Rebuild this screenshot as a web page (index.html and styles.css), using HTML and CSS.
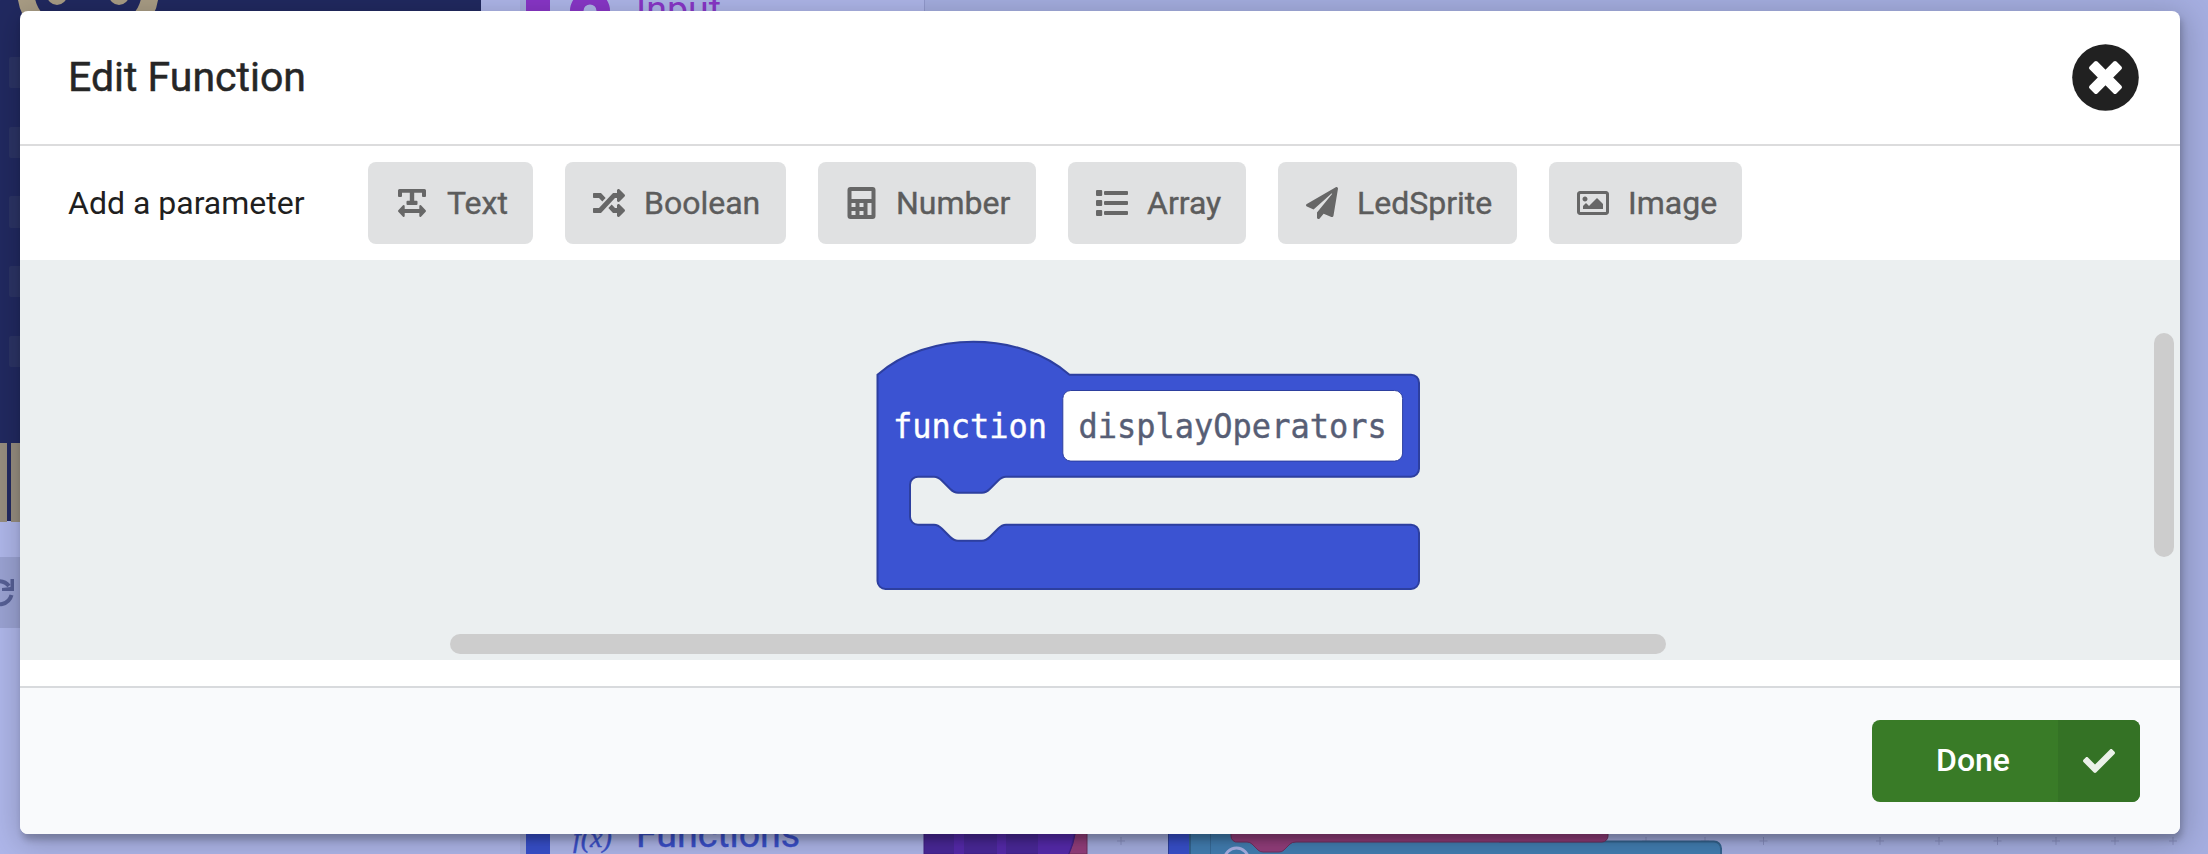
FILE: index.html
```html
<!DOCTYPE html>
<html lang="en">
<head>
<meta charset="utf-8">
<title>Edit Function</title>
<link rel="stylesheet" href="styles.css">
</head>
<body>
<svg class="backdrop" viewBox="0 0 2208 854" aria-hidden="true">
  <!-- simulator board -->
  <rect class="navy" width="481" height="521"/>
  <rect class="ring" x="25.9" y="-49.5" width="124.2" height="83" rx="41.5"/>
  <circle class="gold" cx="57" cy="-5" r="10"/><circle class="gold" cx="119" cy="-5" r="10"/>
  <g class="led">
    <rect x="9" y="57" width="30" height="31" rx="2"/><rect x="9" y="127" width="30" height="31" rx="2"/>
    <rect x="9" y="196" width="30" height="32" rx="2"/><rect x="9" y="266" width="30" height="31" rx="2"/>
    <rect x="9" y="336" width="30" height="31" rx="2"/>
  </g>
  <g class="pin"><rect y="443" width="7" height="79"/><rect x="11" y="443" width="30" height="79"/></g>
  <rect class="simbar" y="557" width="100" height="71"/>
  <path class="refresh" d="M-10 585A12.5 12.5 0 0 1 9 586M11.500 595A12.500 12.500 0 0 1 -10 600"/>
  <path class="refresh-tip" d="M14 579V591H2V588L10.500 587V579Z"/>
  <!-- toolbox -->
  <rect class="row-edge" x="520" width="6" height="854"/>
  <rect class="purple" x="526" width="24" height="400"/>
  <circle class="purple-ring" cx="590" cy="11" r="13.300"/>
  <text class="cat cat-input" x="636" y="22">Input</text>
  <rect class="func" x="526" y="600" width="24" height="254"/>
  <text class="fx" x="573" y="847">f(x)</text>
  <text class="cat cat-func" x="636" y="846.500">Functions</text>
  <rect class="canvas" x="924" width="1284" height="854"/>
  <path class="canvas-edge" d="M924.500 0V800"/>
  <!-- workspace blocks -->
  <path class="plus" d="M1117 841h8m-4-4v8M1642 841h8m-4-4v8M1701 841h8m-4-4v8M1759.500 841h8m-4-4v8M1876 841h8m-4-4v8M1935 841h8m-4-4v8M1993.500 841h8m-4-4v8M2052 841h8m-4-4v8M2111 841h8m-4-4v8M2169 841h8m-4-4v8"/>
  <rect class="maroon" x="1060" y="800" width="27" height="54"/>
  <path class="violet" d="M924 800H1078Q1078 835 1069 854H924Z"/>
  <path class="violet-light" d="M954 800h10v54h-10zM997 800h9v54h-9zM1038 800H1076Q1076 835 1068 854H1038Z"/>
  <rect class="func edge" x="1168.500" y="800" width="30" height="60"/>
  <path class="teal" d="M1190 800H1500V841.500H1714a7 7 0 0 1 7 7V860H1190Z"/>
  <path class="teal-line" d="M1210.500 800V860"/>
  <path class="maroon" d="M1231 800H1608V836a6 6 0 0 1-6 6H1296q-4 0-6 2l-6 6q-2 2-5 2h-16q-3 0-5-2l-6-6q-2-2-5-2h-9a6 6 0 0 1-7-6Z"/>
  <circle class="mutator" cx="1236.500" cy="860" r="12"/>
</svg>

<main class="modal">
  <header class="modal-header">
    <h1 class="title">Edit Function</h1>
    <svg class="close" viewBox="0 0 67 67">
      <circle cx="33.500" cy="33.500" r="33.300"/>
      <g transform="rotate(45 33.500 33.500)"><rect x="14.500" y="28" width="38" height="11" rx="2"/><rect x="28" y="14.500" width="11" height="38" rx="2"/></g>
    </svg>
  </header>

  <section class="params">
    <span class="params-label">Add a parameter</span>
    <button class="param w-text"><svg class="icon" viewBox="-2 -2 32 32"><path d="M1.500 0h25a1.500 1.500 0 0 1 1.500 1.500V7a1 1 0 0 1-1 1h-2a1 1 0 0 1-1-1V3.800h-7.800v8h2.300a1 1 0 0 1 1 1v2.200a1 1 0 0 1-1 1h-9a1 1 0 0 1-1-1v-2.200a1 1 0 0 1 1-1h2.300v-8H4V7a1 1 0 0 1-1 1H1a1 1 0 0 1-1-1V1.500A1.500 1.500 0 0 1 1.500 0ZM5 16.200q1.500-.8 1.700 1V20h14.600v-2.800q.2-1.800 1.700-1l4.700 5q.6.800 0 1.600l-4.700 5q-1.500.8-1.700-1V24H6.700v2.800q-.2 1.800-1.700 1l-4.700-5q-.6-.8 0-1.600Z"/></svg><span>Text</span></button>
    <button class="param w-boolean"><svg class="icon" viewBox="0 0 512 512"><path d="M504.971 359.029c9.373 9.373 9.373 24.569 0 33.941l-80 79.984c-15.010 15.010-40.971 4.490-40.971-16.971V416h-58.785a12.004 12.004 0 0 1-8.773-3.812l-70.556-75.596 53.333-57.143L352 336h32v-39.981c0-21.438 25.943-31.998 40.971-16.971l80 79.981zM12 176h84l52.781 56.551 53.333-57.143-70.556-75.596A11.999 11.999 0 0 0 122.785 96H12c-6.627 0-12 5.373-12 12v56c0 6.627 5.373 12 12 12zm372 0v39.984c0 21.460 25.961 31.980 40.971 16.971l80-79.984c9.373-9.373 9.373-24.569 0-33.941l-80-79.981C409.943 24.021 384 34.582 384 56.019V96h-58.785a12.004 12.004 0 0 0-8.773 3.812L96 336H12c-6.627 0-12 5.373-12 12v56c0 6.627 5.373 12 12 12h110.785c3.326 0 6.503-1.381 8.773-3.812L352 176h32z"/></svg><span>Boolean</span></button>
    <button class="param w-number"><svg class="icon" viewBox="-1.500 0 32 32"><path fill-rule="evenodd" d="M3 0h22a3 3 0 0 1 3 3v26a3 3 0 0 1-3 3H3a3 3 0 0 1-3-3V3a3 3 0 0 1 3-3ZM4 4v8h20V4ZM4 16v4h4v-4ZM12 16v4h4v-4ZM20 16v12h4V16ZM4 24v4h4v-4ZM12 24v4h4v-4Z"/></svg><span>Number</span></button>
    <button class="param w-array"><svg class="icon" viewBox="0 0 32 32"><rect x="0" y="3" width="6.200" height="6" rx="1"/><rect x="0" y="13" width="6.200" height="6" rx="1"/><rect x="0" y="23" width="6.200" height="6" rx="1"/><rect x="8" y="4" width="24" height="4" rx="1"/><rect x="8" y="14" width="24" height="4" rx="1"/><rect x="8" y="24" width="24" height="4" rx="1"/></svg><span>Array</span></button>
    <button class="param w-sprite"><svg class="icon" viewBox="0 0 512 512"><path d="M476 3.200L12.500 270.600c-18.100 10.400-15.800 35.600 2.200 43.200L121 358.400l287.300-253.200c5.500-4.900 13.300 2.600 8.600 8.300L176 407v80.500c0 23.600 28.500 32.900 42.500 15.800L282 426l124.600 52.200c14.200 6 30.400-2.900 33-18.200l72-432C515 7.800 493.300-6.800 476 3.200z"/></svg><span>LedSprite</span></button>
    <button class="param w-image"><svg class="icon" viewBox="0 0 512 512"><path d="M464 64H48C21.490 64 0 85.490 0 112v288c0 26.510 21.490 48 48 48h416c26.510 0 48-21.490 48-48V112c0-26.510-21.490-48-48-48zm-6 336H54a6 6 0 0 1-6-6V118a6 6 0 0 1 6-6h404a6 6 0 0 1 6 6v276a6 6 0 0 1-6 6zM128 152c-22.091 0-40 17.909-40 40s17.909 40 40 40 40-17.909 40-40-17.909-40-40-40zM96 352h320v-80l-87.515-87.515c-4.686-4.686-12.284-4.686-16.971 0L192 304l-39.515-39.515c-4.686-4.686-12.284-4.686-16.971 0L96 304v48z"/></svg><span>Image</span></button>
  </section>

  <section class="workspace">
    <svg class="block" viewBox="20 260 2160 400">
      <path class="block-shape" d="M877.500 374.700c50-44 142-44 192 0H1411a8 8 0 0 1 8 8V468.700a8 8 0 0 1-8 8H1006c-4 0-6 2-8 4l-8 8c-2 2-4 4-8 4h-24c-4 0-6-2-8-4l-8-8c-2-2-4-4-8-4h-16a8 8 0 0 0-8 8V516.700a8 8 0 0 0 8 8h16c4 0 6 2 8 4l8 8c2 2 4 4 8 4h24c4 0 6-2 8-4l8-8c2-2 4-4 8-4H1411a8 8 0 0 1 8 8V581a8 8 0 0 1-8 8H885.500a8 8 0 0 1-8-8Z"/>
      <rect class="field" x="1062.800" y="390.500" width="339.800" height="70.600" rx="8"/>
      <text class="code keyword" transform="translate(893 438) scale(1 1.06)">function</text>
      <text class="code name" transform="translate(1078.500 438) scale(1 1.06)">displayOperators</text>
    </svg>
    <div class="scroll-h"></div>
    <div class="scroll-v"></div>
  </section>

  <footer class="modal-footer">
    <button class="done"><span class="done-text">Done</span><span class="done-icon"><svg viewBox="0 0 512 512"><path d="M173.898 439.404l-166.400-166.400c-9.997-9.997-9.997-26.206 0-36.204l36.203-36.204c9.997-9.998 26.207-9.998 36.204 0L192 312.690 432.095 72.596c9.997-9.997 26.207-9.997 36.204 0l36.203 36.204c9.997 9.997 9.997 26.206 0 36.204l-294.400 294.401c-9.998 9.997-26.207 9.997-36.204-.001z"/></svg></span></button>
  </footer>
</main>
</body>
</html>
```

FILE: styles.css
```css
* { box-sizing: border-box; }
body {
  margin: 0;
  width: 2208px;
  height: 854px;
  overflow: hidden;
  position: relative;
  background: #aeb6e9;
  font-family: Roboto, "Liberation Sans", sans-serif;
}
button { border: 0; font: inherit; }

.backdrop { position: absolute; left: 0; top: 0; width: 2208px; height: 854px; }
.navy { fill: #212960; }
.gold { fill: #a99d85; }
.ring { fill: none; stroke: #a99d85; stroke-width: 17; }
.led { fill: #2b3364; }
.pin { fill: #968d7f; }
.simbar { fill: #9aa2d2; }
.refresh { fill: none; stroke: #565f95; stroke-width: 4; }
.refresh-tip { fill: #565f95; }
.row-edge { fill: #a6aedf; }
.purple { fill: #8936c8; }
.purple-ring { fill: none; stroke: #8936c8; stroke-width: 13.5; }
.cat { font-size: 37.5px; font-weight: 400; }
.cat-input { fill: #8936c8; }
.cat-func { fill: #3a50cb; stroke: #3a50cb; stroke-width: .4; }
.fx { fill: #3a50cb; stroke: #3a50cb; stroke-width: .4; font: italic 28px "Liberation Serif", serif; }
.func { fill: #3850cc; }
.edge { stroke: #2c3e9b; }
.canvas { fill: #a5aee0; }
.canvas-edge { stroke: #929ace; }
.plus { stroke: #8b92c4; fill: none; }
.maroon { fill: #943e7c; stroke: #71305f; }
.violet { fill: #4a2899; stroke: #432184; }
.violet-light { fill: #562aac; }
.teal { fill: #427eb2; stroke: #346590; stroke-width: 2; }
.teal-line { stroke: #376b99; }
.mutator { fill: none; stroke: #aab2e6; stroke-width: 3; }

.modal {
  position: relative;
  display: flex;
  flex-direction: column;
  width: 2160px;
  height: 823px;
  margin: 11px 0 0 20px;
  border-radius: 8px;
  background: #fff;
  box-shadow: 2px 6px 6px rgba(0, 0, 0, .2), 2px 6px 30px 4px rgba(0, 0, 0, .2);
}
.modal-header {
  display: flex;
  justify-content: space-between;
  align-items: center;
  height: 135px;
  padding: 0 41px 0 48px;
  border-bottom: 2px solid #dcdcdd;
}
.title {
  margin: 0;
  padding-bottom: 2px;
  color: #262626;
  font-size: 41px;
  font-weight: 400;
  line-height: 48px;
  -webkit-text-stroke: .5px #262626;
}
.close { width: 67px; height: 67px; fill: #212121; }
.close g { fill: #fff; }

.params {
  display: flex;
  align-items: center;
  gap: 32px;
  height: 114px;
  padding-left: 48px;
  font-size: 32px;
}
.params-label { width: 268px; color: #1f1f1f; white-space: nowrap; }
.param {
  display: flex;
  align-items: center;
  gap: 19px;
  height: 82px;
  padding: 0 0 0 28px;
  border-radius: 8px;
  background: #e0e1e2;
  color: #5c5c5c;
  white-space: nowrap;
  -webkit-text-stroke: .4px #5c5c5c;
}
.params span { padding-bottom: 1px; }
.icon { width: 32px; height: 32px; flex: none; fill: #676767; }
.w-text { width: 165px; }
.w-boolean { width: 221px; }
.w-number { width: 218px; gap: 18px; }
.w-array { width: 178px; }
.w-sprite { width: 239px; }
.w-image { width: 193px; }

.workspace { position: relative; height: 400px; background: #ebeff0; }
.block { display: block; width: 2160px; height: 400px; }
.block-shape { fill: #3b53d2; stroke: #2d3f9f; stroke-width: 2; }
.field { fill: #fff; stroke: #2d3f9f; stroke-width: 1; }
.code { font-family: "DejaVu Sans Mono", monospace; font-size: 32px; stroke-width: .4; }
.keyword { fill: #fff; stroke: #fff; }
.name { fill: #575e75; stroke: #575e75; }
.scroll-h, .scroll-v { position: absolute; border-radius: 10px; background: #cdcdcd; }
.scroll-h { left: 430px; top: 374px; width: 1216px; height: 20px; }
.scroll-v { left: 2134px; top: 73px; width: 20px; height: 224px; }

.modal-footer {
  display: flex;
  justify-content: flex-end;
  height: 148px;
  margin-top: 26px;
  padding: 32px 40px 0 0;
  border-top: 2px solid #d8dadd;
  border-radius: 0 0 8px 8px;
  background: #f9fafc;
}
.done {
  display: flex;
  width: 268px;
  height: 82px;
  padding: 0;
  overflow: hidden;
  border-radius: 8px;
  background: #397b27;
  color: #fff;
  font-size: 32px;
  font-weight: 500;
}
.done-text { width: 186px; padding-left: 16px; line-height: 81px; text-align: center; }
.done-icon { display: grid; place-items: center; width: 82px; height: 82px; background: #347225; }
.done-icon svg { width: 32px; height: 32px; fill: #ebf1e9; }
```
